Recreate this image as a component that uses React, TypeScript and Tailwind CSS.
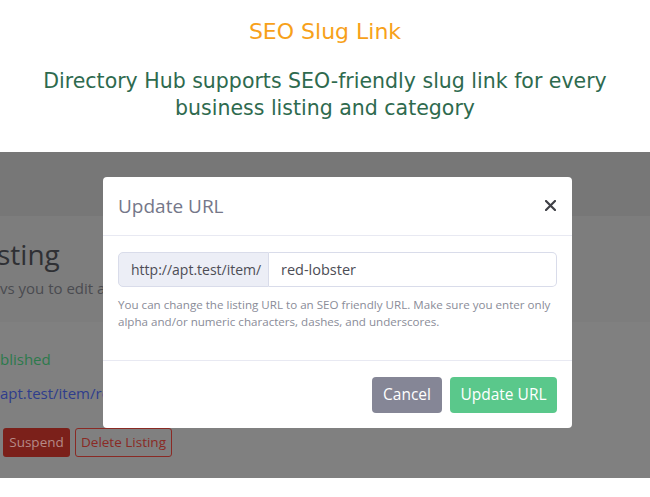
import React from "react";

export default function App() {
  const modalFont = { fontFamily: '"Open Sans", "Noto Sans", sans-serif' };
  return (
    <div className="w-[650px] h-[497px] flex flex-col bg-white overflow-hidden">
      {/* Top heading */}
      <div
        className="h-[152px] flex flex-col items-center pt-[17px]"
        style={{ fontFamily: '"DejaVu Sans", Verdana, sans-serif' }}
      >
        <div className="text-[22px] leading-[30px] text-[#f7a11a]">SEO Slug Link</div>
        <div className="mt-[21px] text-[20.5px] leading-[27px] text-[#2e6a4e] text-center whitespace-nowrap">
          Directory Hub supports SEO-friendly slug link for every
          <br />
          business listing and category
        </div>
      </div>

      {/* Screenshot area */}
      <div className="relative h-[326px] bg-[#808080] overflow-hidden" style={modalFont}>
        {/* background page under overlay */}
        <div className="h-[64px] bg-[#777777]" />
        <div className="h-[106px] bg-[#7d7d7d] pt-[20px]">
          <div className="text-[28px] leading-[36px] text-[#2f3034] -ml-[3px]">sting</div>
          <div className="mt-[6px] text-[15px] leading-[20px] text-[#4a4b50]">vs you to edit and manage</div>
        </div>
        <div className="pt-[27px]">
          <div className="text-[15px] leading-[20px] text-[#2c7a4c]">blished</div>
          <div className="mt-[14px] text-[15px] leading-[20px] text-[#2f3d8c]">apt.test/item/red-lobster</div>
          <div className="mt-[25px] flex gap-[5px] pl-[3px]">
            <div className="h-[29px] w-[67px] flex items-center justify-center rounded-[3px] bg-[#7b201a] text-[13.5px] text-[#b58a87]">Suspend</div>
            <div className="h-[29px] w-[97px] flex items-center justify-center rounded-[3px] border border-[#8a2a24] text-[13.5px] text-[#8a2a24]">Delete Listing</div>
          </div>
        </div>

        {/* Modal */}
        <div className="absolute left-[103px] top-[25px] w-[469px] h-[251px] bg-white rounded-[4px] flex flex-col">
          <div className="h-[59px] flex items-center justify-between pl-[15px] pr-[16px] border-b border-[#e8e9f2]">
            <div className="text-[19px] text-[#757789]">Update URL</div>
            <svg width="11" height="11" viewBox="0 0 11 11" className="mt-[-2px]">
              <path d="M1 1 L10 10 M10 1 L1 10" stroke="#3f4046" strokeWidth="2.2" strokeLinecap="round" />
            </svg>
          </div>
          <div className="flex-1 px-[15px] pt-[16px] border-b border-[#e8e9f2]">
            <div className="flex h-[35px]">
              <div className="w-[151px] flex items-center pl-[12px] bg-[#eceef6] border border-[#d9dcea] rounded-l-[5px] text-[14px] text-[#4c4d55]">
                http://apt.test/item/
              </div>
              <div className="flex-1 flex items-center pl-[12px] border border-l-0 border-[#d9dcea] rounded-r-[5px] text-[14.5px] text-[#4c4d55]">
                red-lobster
              </div>
            </div>
            <div className="mt-[9px] text-[11.6px] leading-[17px] text-[#8a8c98] whitespace-nowrap">
              You can change the listing URL to an SEO friendly URL. Make sure you enter only
              <br />
              alpha and/or numeric characters, dashes, and underscores.
            </div>
          </div>
          <div className="h-[67px] flex justify-end items-start gap-[8px] pt-[16px] pr-[15px]">
            <div className="h-[36px] w-[70px] flex items-center justify-center rounded-[4px] bg-[#858696] text-white text-[15.5px]">Cancel</div>
            <div className="h-[36px] w-[107px] flex items-center justify-center rounded-[4px] bg-[#5ac88b] text-white text-[15.5px]">Update URL</div>
          </div>
        </div>
      </div>
      <div className="flex-1 bg-white" />
    </div>
  );
}
